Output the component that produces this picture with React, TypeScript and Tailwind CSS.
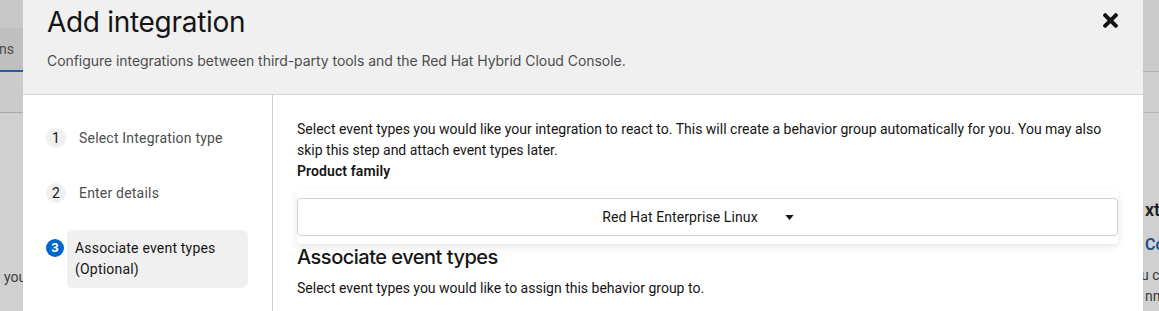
import React from 'react';

const steps = [
  { n: 1, label: 'Select Integration type' },
  { n: 2, label: 'Enter details' },
];

const CloseIcon = () => (
  <svg viewBox="0 80 352 352" className="w-[15px] h-[15px]" fill="#151515">
    <path d="M242.72 256l100.07-100.07c12.28-12.28 12.28-32.19 0-44.48l-22.24-22.24c-12.28-12.28-32.19-12.28-44.48 0L176 189.28 75.93 89.21c-12.28-12.28-32.19-12.28-44.48 0L9.21 111.45c-12.28 12.28-12.28 32.19 0 44.48L109.28 256 9.21 356.07c-12.28 12.28-12.28 32.19 0 44.48l22.24 22.24c12.28 12.28 32.2 12.28 44.48 0L176 322.72l100.07 100.07c12.28 12.28 32.2 12.28 44.48 0l22.24-22.24c12.28-12.28 12.28-32.19 0-44.48L242.72 256z" />
  </svg>
);

const Caret = () => (
  <svg viewBox="0 0 10 6" className="w-[9px] h-[5px]" fill="#151515">
    <polygon points="0,0 10,0 5,6" />
  </svg>
);

const App: React.FC = () => {
  return (
    <div className="w-[1159px] h-[311px] overflow-hidden flex bg-[#cfcfcf] font-['Roboto',sans-serif] text-[#151515]">
      {/* page behind the modal, left side */}
      <div className="w-[23px] shrink-0 flex flex-col overflow-hidden">
        <div className="h-[28px] bg-[#c7c7c7]" />
        <div className="h-[42px] bg-[#bfbfbf] flex items-center text-[14px] text-[#4a4a4a] -indent-[1px]">ns</div>
        <div className="h-[2px] bg-[#1d5ea8]" />
        <div className="h-[41px] bg-[#cbcbcb] border-b border-[#a9a9a9]" />
        <div className="flex-1 bg-[#d0d0d0] pt-[154px] pl-[4px] text-[14px] leading-[21px] text-[#3a3a3a] whitespace-nowrap">you</div>
      </div>

      {/* modal */}
      <div className="w-[1120px] shrink-0 bg-white flex flex-col">
        <div className="bg-[#f0f0f0] border-b border-[#d2d2d2] h-[95px] pl-[24px] pr-[24px] pt-[4px] flex font-['Inter',sans-serif]">
          <div className="flex-1">
            <h1 className="text-[28px] leading-[36px] font-normal tracking-[-0.3px]">Add integration</h1>
            <p className="mt-[10px] text-[14px] leading-[21px] text-[#4d4d4d] tracking-[-0.05px]">
              Configure integrations between third-party tools and the Red Hat Hybrid Cloud Console.
            </p>
          </div>
          <button className="mt-[9px] mr-[1px] w-[15px] h-[15px] flex items-center justify-center">
            <CloseIcon />
          </button>
        </div>

        <div className="flex flex-1">
          <nav className="w-[250px] shrink-0 border-r border-[#d2d2d2] pt-[33px] pl-[23px]">
            {steps.map((s) => (
              <div key={s.n} className="flex items-center h-[20px] mb-[35px]">
                <span className="w-[20px] h-[20px] rounded-full bg-[#f0f0f0] flex items-center justify-center text-[14px] text-[#151515]">
                  {s.n}
                </span>
                <span className="ml-[13px] text-[14px] text-[#4d4d4d] tracking-[0.2px]">{s.label}</span>
              </div>
            ))}
            <div className="flex items-start mt-[-8px]">
              <span className="mt-[9px] w-[18px] h-[18px] rounded-full bg-[#0066cc] flex items-center justify-center text-[13px] font-bold text-white">
                3
              </span>
              <div className="ml-[3px] w-[181px] rounded-[6px] bg-[#f0f0f0] px-[8px] pt-[8px] pb-[8px] text-[14px] leading-[21px] tracking-[0.2px]">
                Associate event types
                <br />
                (Optional)
              </div>
            </div>
          </nav>

          <main className="flex-1 pl-[24px] pr-[25px] pt-[24px]">
            <p className="text-[14px] leading-[21px]">
              Select event types you would like your integration to react to. This will create a behavior group automatically for you. You may also skip this step and attach event types later.
            </p>
            <div className="text-[14px] leading-[21px] font-semibold tracking-[0.1px]">Product family</div>
            <div className="mt-[8px] py-[8px] rounded-[4px] shadow-[0_3px_8px_rgba(0,0,0,0.1)]">
              <button className="w-full h-[38px] border border-[#d2d2d2] rounded-[4px] bg-white flex items-center justify-center gap-[27px] pr-[19px] text-[14px] tracking-[0.1px]">
                <span>Red Hat Enterprise Linux</span>
                <Caret />
              </button>
            </div>
            <h2 className="text-[20px] leading-[26px] font-medium font-['Inter',sans-serif] tracking-[-0.5px]">Associate event types</h2>
            <p className="mt-[8px] text-[14px] leading-[21px]">Select event types you would like to assign this behavior group to.</p>
          </main>
        </div>
      </div>

      {/* page behind the modal, right side */}
      <div className="flex-1 flex flex-col overflow-hidden whitespace-nowrap">
        <div className="h-[72px] bg-[#cbcbcb] border-b border-[#b0b0b0]" />
        <div className="h-[41px] bg-[#cfcfcf] border-b border-[#b5b5b5]" />
        <div className="flex-1 bg-[#d0d0d0] pl-[2px]">
          <div className="mt-[86px] text-[18px] leading-[22px] font-semibold text-[#222]">xt</div>
          <div className="mt-[14px] text-[16px] leading-[20px] font-semibold text-[#1c4f8a]">Co</div>
          <div className="mt-[10px] text-[14px] leading-[21px] text-[#3a3a3a] -ml-[4px]">u ca</div>
          <div className="text-[14px] leading-[21px] text-[#3a3a3a]">nn</div>
        </div>
      </div>
    </div>
  );
};

export default App;
